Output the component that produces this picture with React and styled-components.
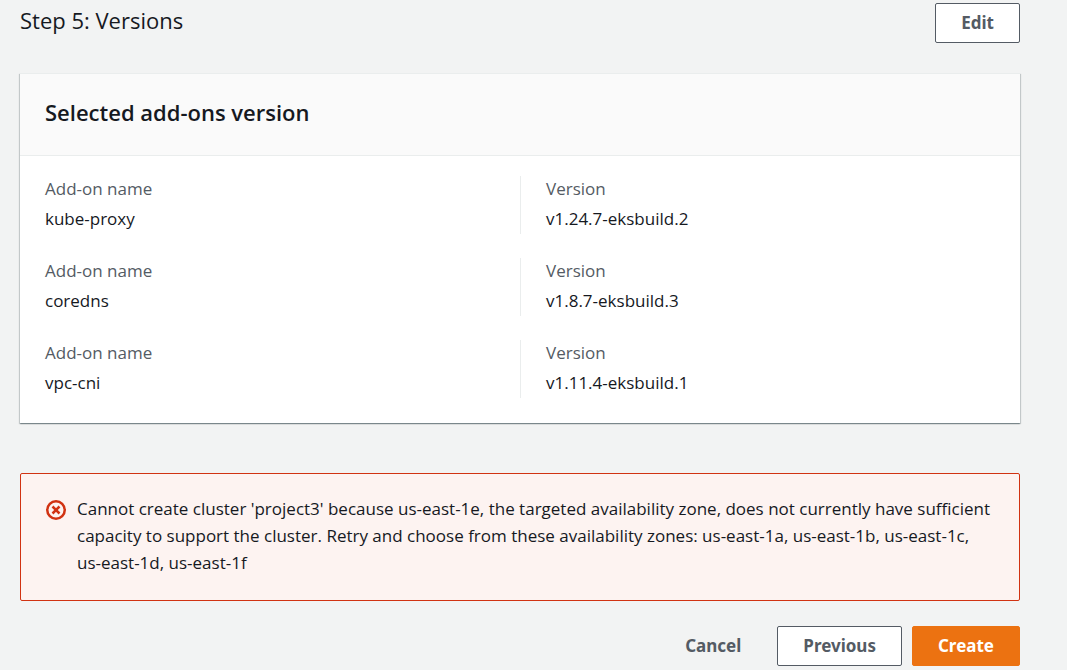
import React from "react";
import styled, { createGlobalStyle } from "styled-components";

const Global = createGlobalStyle`
  * { box-sizing: border-box; }
  body {
    margin: 0;
    background: #f2f3f3;
    color: #16191f;
    font-family: "Open Sans", "Noto Sans", sans-serif;
    font-size: 17px;
    line-height: 27px;
  }
`;

const Page = styled.main`
  padding: 3px 47px 4px 20px;
`;

const StepHeader = styled.header`
  display: flex;
  align-items: flex-start;
  justify-content: space-between;
  margin-bottom: 30px;
`;

const StepTitle = styled.h2`
  margin: 0;
  font-size: 22px;
  font-weight: 400;
  line-height: 34px;
`;

const Button = styled.button`
  height: 40px;
  padding: 0 25px 2px;
  border: 1px solid ${(p) => (p.$kind === "primary" ? "#ec7211" : p.$kind === "link" ? "transparent" : "#545b64")};
  border-radius: 2px;
  background: ${(p) => (p.$kind === "primary" ? "#ec7211" : p.$kind === "link" ? "transparent" : "#fff")};
  color: ${(p) => (p.$kind === "primary" ? "#fff" : "#545b64")};
  font: 700 17px/27px "Noto Sans", sans-serif;
  cursor: pointer;
`;

const Card = styled.section`
  background: #fff;
  border-top: 1px solid #eaeded;
  box-shadow: 0 1px 1px 0 rgba(0, 28, 36, 0.3), 1px 1px 1px 0 rgba(0, 28, 36, 0.15), -1px 1px 1px 0 rgba(0, 28, 36, 0.15);
`;

const CardHeader = styled.div`
  padding: 21px 25px 26px;
  background: #fafafa;
  border-bottom: 1px solid #eaeded;
`;

const CardTitle = styled.h3`
  margin: 0;
  font-size: 22px;
  font-weight: 600;
  line-height: 34px;
`;

const Rows = styled.div`
  display: grid;
  gap: 24px;
  padding: 20px 0 25px;
`;

const Row = styled.dl`
  display: grid;
  grid-template-columns: 1fr 1fr;
  margin: 0;
`;

const Field = styled.div`
  padding: 0 25px 3px;
  line-height: 25px;
  & + & { border-left: 1px solid #eaeded; }
`;

const Label = styled.dt`
  color: #545b64;
`;

const Value = styled.dd`
  margin: 5px 0 0;
`;

const Alert = styled.div`
  display: flex;
  gap: 11px;
  margin-top: 50px;
  padding: 21px 25px 24px;
  border: 1px solid #d13212;
  border-radius: 2px;
  background: #fdf3f1;
`;

const AlertIcon = styled.svg`
  flex: none;
  width: 20px;
  height: 20px;
  margin-top: 5px;
`;

const AlertText = styled.p`
  margin: 0;
`;

const Actions = styled.footer`
  display: flex;
  justify-content: flex-end;
  gap: 10px;
  margin-top: 25px;
`;

const addons = [
  { name: "kube-proxy", version: "v1.24.7-eksbuild.2" },
  { name: "coredns", version: "v1.8.7-eksbuild.3" },
  { name: "vpc-cni", version: "v1.11.4-eksbuild.1" },
];

export default function App() {
  return (
    <Page>
      <Global />
      <StepHeader>
        <StepTitle>Step 5: Versions</StepTitle>
        <Button type="button">Edit</Button>
      </StepHeader>
      <Card>
        <CardHeader>
          <CardTitle>Selected add-ons version</CardTitle>
        </CardHeader>
        <Rows>
          {addons.map((a) => (
            <Row key={a.name}>
              <Field>
                <Label>Add-on name</Label>
                <Value>{a.name}</Value>
              </Field>
              <Field>
                <Label>Version</Label>
                <Value>{a.version}</Value>
              </Field>
            </Row>
          ))}
        </Rows>
      </Card>
      <Alert role="alert">
        <AlertIcon viewBox="0 0 16 16" fill="none" stroke="#d13212" strokeWidth="2" aria-hidden="true">
          <circle cx="8" cy="8" r="7" />
          <path d="M10.8 5.2l-5.6 5.6M5.2 5.2l5.6 5.6" />
        </AlertIcon>
        <AlertText>
          Cannot create cluster 'project3' because us-east-1e, the targeted availability zone, does not currently have
          sufficient capacity to support the cluster. Retry and choose from these availability zones: us-east-1a,
          us-east-1b, us-east-1c, us-east-1d, us-east-1f
        </AlertText>
      </Alert>
      <Actions>
        <Button type="button" $kind="link">Cancel</Button>
        <Button type="button">Previous</Button>
        <Button type="button" $kind="primary">Create</Button>
      </Actions>
    </Page>
  );
}
